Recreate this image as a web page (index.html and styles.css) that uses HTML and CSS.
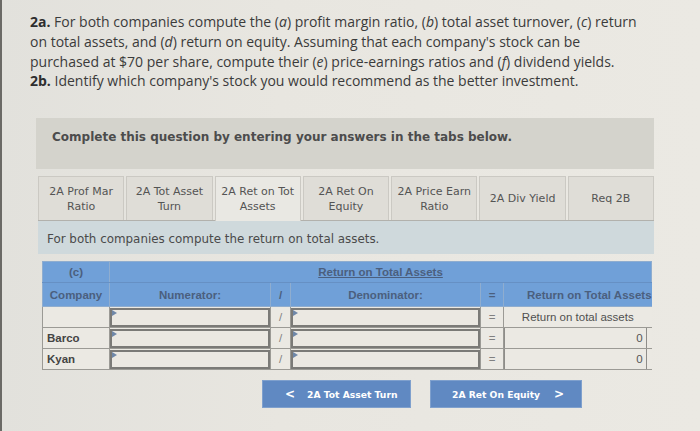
FILE: index.html
```html
<!DOCTYPE html>
<html>
<head>
<meta charset="utf-8">
<link rel="stylesheet" href="styles.css">
</head>
<body>
<div class="page">
  <p class="prompt"><b>2a.</b> For both companies compute the (<i>a</i>) profit margin ratio, (<i>b</i>) total asset turnover, (<i>c</i>) return<br>on total assets, and (<i>d</i>) return on equity. Assuming that each company's stock can be<br>purchased at $70 per share, compute their (<i>e</i>) price-earnings ratios and (<i>f</i>) dividend yields.<br><b>2b.</b> Identify which company's stock you would recommend as the better investment.</p>

  <div class="card">
    <div class="instr">Complete this question by entering your answers in the tabs below.</div>
    <div class="tabs">
      <div class="tab">2A Prof Mar<br>Ratio</div>
      <div class="tab">2A Tot Asset<br>Turn</div>
      <div class="tab active">2A Ret on Tot<br>Assets</div>
      <div class="tab">2A Ret On<br>Equity</div>
      <div class="tab">2A Price Earn<br>Ratio</div>
      <div class="tab">2A Div Yield</div>
      <div class="tab">Req 2B</div>
    </div>
    <div class="panel">For both companies compute the return on total assets.</div>
    <table class="grid">
      <colgroup>
        <col class="c-co"><col class="c-num"><col class="c-op"><col class="c-den"><col class="c-eq"><col class="c-res">
      </colgroup>
      <tr class="h1">
        <th>(c)</th>
        <th colspan="5"><span class="u">Return on Total Assets</span></th>
      </tr>
      <tr class="h2">
        <th>Company</th>
        <th>Numerator:</th>
        <th class="op">/</th>
        <th>Denominator:</th>
        <th class="op">=</th>
        <th class="res-h">Return on Total Assets</th>
      </tr>
      <tr>
        <td></td>
        <td class="inp"><div class="box"></div></td>
        <td class="op">/</td>
        <td class="inp"><div class="box"></div></td>
        <td class="op">=</td>
        <td class="center">Return on total assets</td>
      </tr>
      <tr>
        <td>Barco</td>
        <td class="inp"><div class="box"></div></td>
        <td class="op">/</td>
        <td class="inp"><div class="box"></div></td>
        <td class="op">=</td>
        <td class="val"><div class="vbox">0</div></td>
      </tr>
      <tr>
        <td>Kyan</td>
        <td class="inp"><div class="box"></div></td>
        <td class="op">/</td>
        <td class="inp"><div class="box"></div></td>
        <td class="op">=</td>
        <td class="val"><div class="vbox">0</div></td>
      </tr>
    </table>
    <div class="nav">
      <div class="btn prev"><span class="chev">&lt;</span>2A Tot Asset Turn</div>
      <div class="btn next">2A Ret On Equity<span class="chev">&gt;</span></div>
    </div>
  </div>
</div>
</body>
</html>
```

FILE: styles.css
```css
html, body {
  margin: 0;
  padding: 0;
}
body {
  width: 700px;
  height: 431px;
  overflow: hidden;
  background: linear-gradient(90deg, #e2e1dc 0%, #e8e6e0 40%, #ebe9e3 100%);
  border-left: 2px solid #6b6a66;
  box-sizing: border-box;
}
.page {
  padding: 12px 0 0 28px;
}
.prompt {
  margin: 0;
  font-family: "Open Sans", "Lato", sans-serif;
  font-size: 14px;
  line-height: 19.8px;
  color: #3b3b3b;
}
.prompt b {
  font-weight: 700;
  color: #2e2e2e;
}
.prompt i {
  font-style: italic;
}
.card {
  margin-left: 6px;
  margin-top: 27px;
  width: 618px;
}
.instr {
  background: #d4d3cc;
  height: 51px;
  box-sizing: border-box;
  padding: 12px 0 0 16px;
  font-family: "DejaVu Sans", Verdana, sans-serif;
  font-weight: bold;
  font-size: 12px;
  color: #4c4c4c;
}
.tabs {
  display: flex;
  gap: 2px;
  margin: 7px 0 0 2px;
  border-bottom: 1px solid #b2b1ac;
  height: 44px;
}
.tab {
  flex: 1 1 0;
  display: flex;
  align-items: center;
  justify-content: center;
  text-align: center;
  background: #dfddd7;
  border: 1px solid #cbc9c3;
  border-bottom: none;
  font-family: "DejaVu Sans", Verdana, sans-serif;
  font-size: 11px;
  line-height: 15px;
  color: #545454;
}
.tab.active {
  background: #e9e8e3;
  margin-bottom: -1px;
}
.panel {
  margin-left: 2px;
  background: #cfd9dc;
  height: 33px;
  box-sizing: border-box;
  padding: 11px 0 0 9px;
  font-family: "DejaVu Sans", Verdana, sans-serif;
  font-size: 11.9px;
  color: #4a4a4a;
}
.grid {
  margin: 7px 0 0 6px;
  border-collapse: collapse;
  width: 609px;
  table-layout: fixed;
  font-family: "Liberation Sans", Arial, sans-serif;
  font-size: 11.5px;
}
.c-co { width: 67px; }
.c-num { width: 161px; }
.c-op { width: 20px; }
.c-den { width: 190px; }
.c-eq { width: 23px; }
.c-res { width: 148px; }
.grid th {
  background: #70a0d8;
  color: #4b5f7e;
  font-weight: bold;
  padding: 0;
  border: 1px solid #8fadcf;
  white-space: nowrap;
  overflow: hidden;
}
.h1 th {
  height: 20px;
  border-bottom-color: #6690c4;
}
.h2 th {
  height: 23px;
}
.grid .u {
  text-decoration: underline;
}
.grid th.res-h {
  text-align: right;
  padding-right: 0;
  border-right: none;
}
.grid td {
  height: 20px;
  padding: 0 4px;
  border: 1px solid #9b9a95;
  color: #444;
  font-weight: bold;
  background: #ebe9e3;
}
.grid td.op {
  text-align: center;
  font-weight: normal;
  color: #808080;
  padding: 0;
}
.grid td.center {
  text-align: center;
  font-weight: normal;
  color: #505050;
  border-right: none;
  border-top: none;
}
.grid td.inp {
  padding: 0;
}
.box {
  position: relative;
  height: 15px;
  border: 2px solid #7b7a77;
  background: #ebe8e2;
}
.box::before {
  content: "";
  position: absolute;
  left: 0;
  top: 0;
  border-top: 3px solid transparent;
  border-bottom: 3px solid transparent;
  border-left: 5px solid #6f87a8;
}
.grid td.val {
  padding: 0 5px 0 0;
  border-right: none;
}
.vbox {
  height: 20px;
  line-height: 20px;
  border-left: 1px solid #8e8d89;
  border-right: 1px solid #8e8d89;
  text-align: right;
  padding-right: 3px;
  font-weight: normal;
  color: #555;
}
.nav {
  display: flex;
  gap: 19px;
  margin: 10px 0 0 226px;
}
.btn {
  height: 28px;
  box-sizing: border-box;
  background: #6089c2;
  color: #fff;
  font-family: "DejaVu Sans", Verdana, sans-serif;
  font-weight: bold;
  font-size: 9.2px;
  display: flex;
  align-items: center;
  border: 1px solid #7fa0cd;
}
.btn.prev {
  width: 149px;
  padding-left: 22px;
}
.btn.next {
  width: 152px;
  padding-left: 21px;
}
.chev {
  font-size: 12px;
  font-weight: bold;
}
.prev .chev {
  margin-right: 12px;
}
.next .chev {
  margin-left: 14px;
}
```
